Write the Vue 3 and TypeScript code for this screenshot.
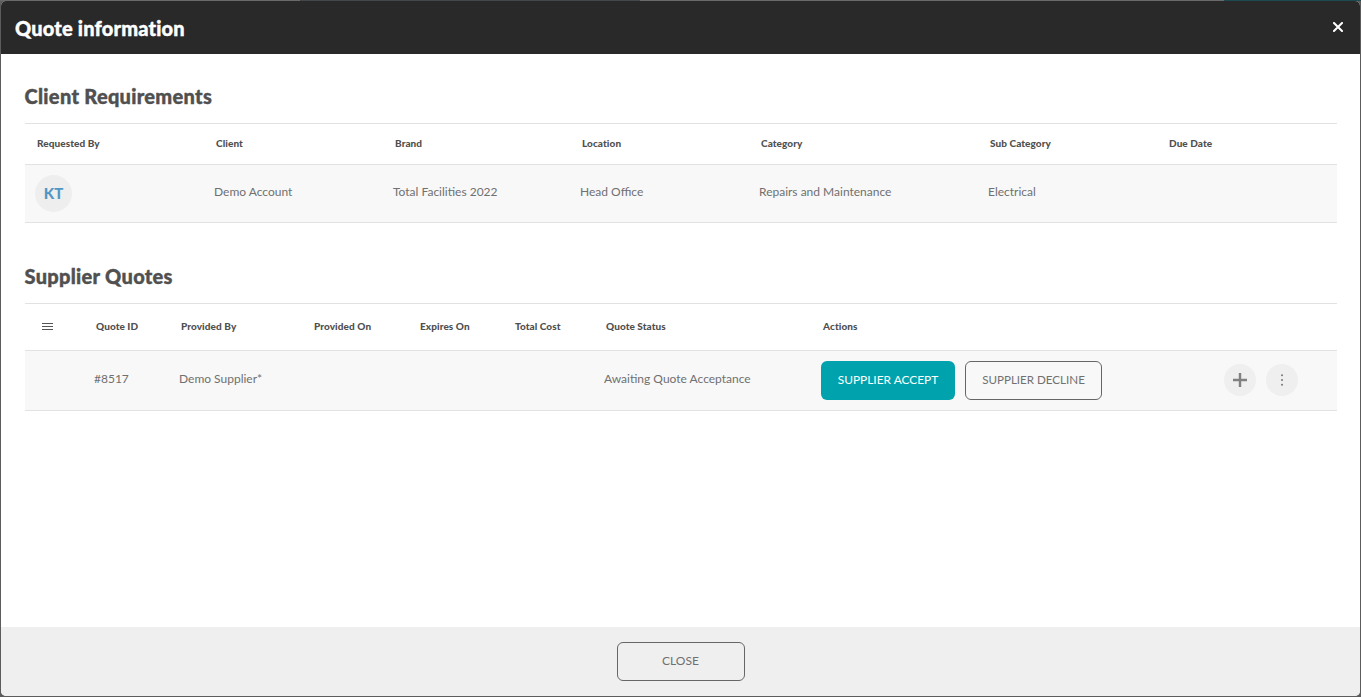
<script setup lang="ts">
const clientHeads: string[] = ['Requested By', 'Client', 'Brand', 'Location', 'Category', 'Sub Category', 'Due Date']
const clientCells: string[] = ['Demo Account', 'Total Facilities 2022', 'Head Office', 'Repairs and Maintenance', 'Electrical', '']
const quoteHeads: string[] = ['Quote ID', 'Provided By', 'Provided On', 'Expires On', 'Total Cost', 'Quote Status', 'Actions']
const quoteCells: string[] = ['#8517', 'Demo Supplier*', '', '', '', 'Awaiting Quote Acceptance']
</script>

<template>
  <div class="page">
    <div class="strip">
      <span class="seg seg-a"></span>
      <span class="seg seg-b"></span>
      <span class="seg seg-c"></span>
      <span class="seg seg-d"></span>
    </div>
    <div class="modal">
      <header class="head">
        <h1>Quote information</h1>
        <svg class="x" width="10" height="10" viewBox="0 0 10 10" aria-label="Close">
          <path d="M1 1 9 9M9 1 1 9" stroke="#fff" stroke-width="2" stroke-linecap="square" fill="none" />
        </svg>
      </header>

      <main class="body">
        <section class="sec-client">
          <h2>Client Requirements</h2>
          <div class="grid client hrow">
            <div v-for="h in clientHeads" :key="h" class="th">{{ h }}</div>
          </div>
          <div class="grid client brow brow-client">
            <div class="td"><span class="avatar">KT</span></div>
            <div v-for="(c, i) in clientCells" :key="i" class="td">{{ c }}</div>
          </div>
        </section>

        <section class="sec-quote">
          <h2>Supplier Quotes</h2>
          <div class="grid quote hrow hrow-quote">
            <div class="th menu">
              <svg width="11" height="8" viewBox="0 0 11 8">
                <path d="M0 .5h11M0 3.5h11M0 6.5h11" stroke="#555" stroke-width="1" fill="none" />
              </svg>
            </div>
            <div v-for="h in quoteHeads" :key="h" class="th">{{ h }}</div>
          </div>
          <div class="grid quote brow brow-quote">
            <div class="td"></div>
            <div v-for="(c, i) in quoteCells" :key="i" class="td">{{ c }}</div>
            <div class="td actions">
              <button class="btn accept">SUPPLIER ACCEPT</button>
              <button class="btn decline">SUPPLIER DECLINE</button>
              <span class="spacer"></span>
              <span class="round">
                <svg width="14" height="14" viewBox="0 0 14 14">
                  <path d="M7 0v14M0 7h14" stroke="#808080" stroke-width="2.4" fill="none" />
                </svg>
              </span>
              <span class="round">
                <svg width="4" height="12" viewBox="0 0 4 12">
                  <circle cx="2" cy="1.2" r="1" fill="#777" />
                  <circle cx="2" cy="6" r="1" fill="#777" />
                  <circle cx="2" cy="10.8" r="1" fill="#777" />
                </svg>
              </span>
            </div>
          </div>
        </section>
      </main>

      <footer class="foot">
        <button class="btn close">CLOSE</button>
      </footer>
    </div>
  </div>
</template>

<style>
html, body { margin: 0; background: #5c5c5c; overflow: hidden; }
</style>

<style scoped>
.page {
  width: 1361px;
  height: 697px;
  display: flex;
  flex-direction: column;
  background: #5c5c5c;
  font-family: "Lato", "Liberation Sans", sans-serif;
  overflow: hidden;
}
.strip { display: flex; height: 1px; flex: none; }
.seg-a { width: 300px; background: #6a6a6a; }
.seg-b { width: 340px; background: #43474c; }
.seg-c { width: 584px; background: #6a6a6a; }
.seg-d { flex: 1; background: #1d4a50; }
.modal {
  flex: 1;
  margin: 0 1px 1px;
  display: flex;
  flex-direction: column;
  background: #fff;
  border-radius: 5px;
  overflow: hidden;
}
.head {
  height: 53px;
  flex: none;
  background: #292929;
  display: flex;
  align-items: center;
  justify-content: space-between;
  padding: 0 17px 0 14px;
}
h1 {
  margin: 0;
  color: #fff;
  font-size: 20px;
  font-weight: 900;
  line-height: 24px;
  letter-spacing: 0.18px;
  -webkit-text-stroke: 0.4px #fff;
}
.x { display: block; margin-top: -1px; }
.body { flex: 1; padding: 0 23px 0 24px; min-height: 0; }
h2 {
  margin: 0;
  color: #505050;
  font-size: 20px;
  font-weight: 900;
  line-height: 24px;
  letter-spacing: 0.3px;
  -webkit-text-stroke: 0.4px #505050;
  position: relative;
  left: -0.5px;
}
.sec-client { padding-top: 30px; }
.sec-client h2 { margin-bottom: 15px; }
.sec-quote { padding-top: 41px; }
.sec-quote h2 { margin-bottom: 15px; }
.grid { display: grid; align-items: center; }
.client { grid-template-columns: 179px 179px 187px 179px 229px 179px 1fr; }
.quote { grid-template-columns: 59px 85px 133px 106px 95px 91px 217px 1fr; }
.hrow {
  height: 40px;
  border-top: 1px solid #e2e2e2;
  border-bottom: 1px solid #e2e2e2;
}
.hrow-quote { height: 46px; }
.th {
  padding-left: 12px;
  padding-bottom: 2px;
  color: #505050;
  font-size: 10px;
  font-weight: 900;
  line-height: 14px;
  letter-spacing: 0.08px;
}
.menu { display: flex; padding-left: 17px; padding-bottom: 1px; }
.menu svg { display: block; }
.brow { background: #f8f8f8; border-bottom: 1px solid #e2e2e2; }
.brow-client { height: 57px; }
.brow-quote { height: 59px; }
.td {
  padding-left: 10px;
  padding-bottom: 3px;
  color: #707070;
  font-size: 12px;
  line-height: 16px;
}
.avatar {
  display: flex;
  align-items: center;
  justify-content: center;
  width: 37px;
  height: 37px;
  border-radius: 50%;
  background: #eee;
  color: #4f97c4;
  font-size: 15px;
  font-weight: 900;
  margin-top: 3px;
  padding-bottom: 1px;
  box-sizing: border-box;
}
.actions {
  display: flex;
  align-items: center;
  padding-bottom: 1px;
  padding-right: 39px;
}
.btn {
  font-family: inherit;
  font-size: 11.6px;
  border-radius: 6px;
  padding: 0 0 2px;
  height: 39px;
  box-sizing: border-box;
  cursor: pointer;
}
.accept {
  width: 134px;
  background: #00a3ad;
  border: 0;
  color: #fff;
  font-size: 11.9px;
  font-weight: 400;
  margin-right: 10px;
}
.decline {
  width: 137px;
  background: transparent;
  border: 1px solid #666;
  color: #707070;
}
.spacer { flex: 1; }
.round {
  width: 32px;
  height: 32px;
  border-radius: 50%;
  background: #efefef;
  display: flex;
  align-items: center;
  justify-content: center;
  margin-left: 10px;
}
.round svg { display: block; }
.foot {
  height: 69px;
  flex: none;
  background: #efefef;
  display: flex;
  justify-content: center;
  padding-top: 15px;
  box-sizing: border-box;
}
.close {
  width: 128px;
  padding-bottom: 3px;
  font-size: 12px;
  background: transparent;
  border: 1px solid #666;
  color: #707070;
}
</style>
